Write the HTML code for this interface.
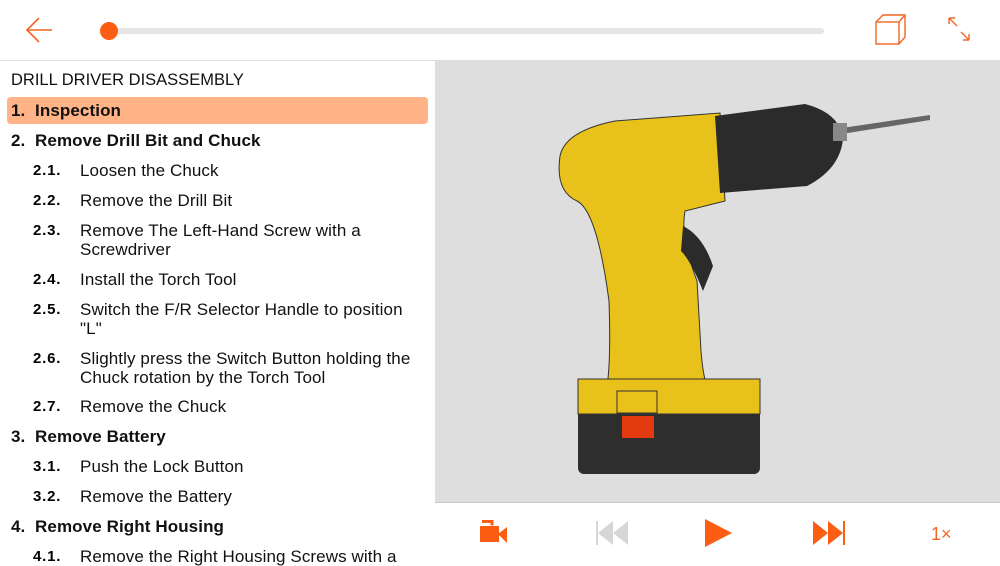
<!DOCTYPE html>
<html><head><meta charset="utf-8"><style>
body{margin:0;width:1000px;height:563px;overflow:hidden;background:#fff;font-family:"Liberation Sans",sans-serif;position:relative}
.a{position:absolute}
.r{position:absolute;font-size:17px;color:#111;line-height:19px;letter-spacing:0.1px}
.n{position:absolute;font-weight:bold;font-size:15px;letter-spacing:0.8px}
</style></head><body>
<svg class="a" style="left:0;top:0" width="1000" height="61">
<path d="M52 30H28M39 18L27 30L39 42" stroke="#f26522" stroke-width="1.6" fill="none"/>
<rect x="107" y="28" width="717" height="6" rx="3" fill="#e5e5e5"/>
<circle cx="109" cy="31" r="9" fill="#fb5d13"/>
<g stroke="#f26522" fill="none" stroke-width="1.4"><rect x="876" y="22" width="23" height="22"/><path d="M876 22l7-7h22v22l-6 7M899 22l6-7"/></g>
<g stroke="#f26522" fill="none" stroke-width="1.4"><path d="M949 18l8 8M949 18v6M949 18h6M969 40l-8-8M969 40v-6M969 40h-6"/></g>
<line x1="0" y1="60.5" x2="1000" y2="60.5" stroke="#ddd"/>
</svg>
<div class="a" style="left:435px;top:61px;width:565px;height:441px;background:#dedede"></div>
<div class="a" style="left:435px;top:502px;width:565px;height:1px;background:#c8c8c8"></div>
<svg class="a" style="left:435px;top:61px" width="565" height="441">
<path d="M400 68l95-14v5l-95 15z" fill="#666"/>
<path d="M125 95Q130 70 180 60L285 52L290 140L250 150Q245 175 262 220L266 290Q268 315 272 325L172 325Q176 300 174 240Q162 150 142 140Q120 130 125 95Z" fill="#e8c21a" stroke="#333"/>
<path d="M280 55L370 43Q405 52 408 78Q405 108 372 125L285 132Z" fill="#2b2b2b"/>
<rect x="398" y="62" width="14" height="18" fill="#888"/>
<path d="M248 165q20 10 30 40l-10 25q-12-30-22-40z" fill="#2b2b2b"/>
<rect x="143" y="318" width="182" height="95" rx="6" fill="#2e2e2e"/>
<path d="M143 318h182v35h-182z" fill="#e8c21a" stroke="#333"/>
<rect x="182" y="330" width="40" height="22" fill="#e8c21a" stroke="#333"/>
<rect x="187" y="355" width="32" height="22" fill="#e33a10"/>
</svg>
<div class="a" style="left:11px;top:71px;font-size:16.5px;color:#111">DRILL DRIVER DISASSEMBLY</div>
<div class="a" style="left:7px;top:97px;width:421px;height:27px;background:#ffb386;border-radius:4px"></div>
<div class="r" style="left:11px;top:101px;font-weight:bold">1.&nbsp; Inspection</div>
<div class="r" style="left:11px;top:131px;font-weight:bold">2.&nbsp; Remove Drill Bit and Chuck</div>
<div class="n" style="left:33px;top:162px">2.1.</div><div class="r" style="left:80px;top:161px">Loosen the Chuck</div>
<div class="n" style="left:33px;top:192px">2.2.</div><div class="r" style="left:80px;top:191px">Remove the Drill Bit</div>
<div class="n" style="left:33px;top:222px">2.3.</div><div class="r" style="left:80px;top:221px">Remove The Left-Hand Screw with a<br>Screwdriver</div>
<div class="n" style="left:33px;top:271px">2.4.</div><div class="r" style="left:80px;top:270px">Install the Torch Tool</div>
<div class="n" style="left:33px;top:301px">2.5.</div><div class="r" style="left:80px;top:300px">Switch the F/R Selector Handle to position<br>"L"</div>
<div class="n" style="left:33px;top:350px">2.6.</div><div class="r" style="left:80px;top:349px">Slightly press the Switch Button holding the<br>Chuck rotation by the Torch Tool</div>
<div class="n" style="left:33px;top:398px">2.7.</div><div class="r" style="left:80px;top:397px">Remove the Chuck</div>
<div class="r" style="left:11px;top:427px;font-weight:bold">3.&nbsp; Remove Battery</div>
<div class="n" style="left:33px;top:458px">3.1.</div><div class="r" style="left:80px;top:457px">Push the Lock Button</div>
<div class="n" style="left:33px;top:488px">3.2.</div><div class="r" style="left:80px;top:487px">Remove the Battery</div>
<div class="r" style="left:11px;top:517px;font-weight:bold">4.&nbsp; Remove Right Housing</div>
<div class="n" style="left:33px;top:548px">4.1.</div><div class="r" style="left:80px;top:547px">Remove the Right Housing Screws with a</div>
<svg class="a" style="left:435px;top:503px" width="565" height="60">
<rect x="45" y="23" width="19" height="16" fill="#fb5d13"/>
<path d="M47 18.5h10v4" stroke="#fb5d13" stroke-width="3" fill="none"/>
<path d="M63 31l9-7v16z" fill="#fb5d13"/>
<rect x="161" y="18" width="2" height="24" fill="#d6d6d6"/><path d="M163 30l15-12v24zM178 30l15-12v24z" fill="#d6d6d6"/>
<path d="M270 16l27 14l-27 14z" fill="#fb5d13"/>
<path d="M378 18l15 12l-15 12zM393 18l15 12l-15 12z" fill="#fb5d13"/><rect x="408" y="18" width="2" height="24" fill="#fb5d13"/>
<text x="496" y="37" font-family="Liberation Sans" font-size="18" fill="#f26522">1×</text>
</svg>
</body></html>
